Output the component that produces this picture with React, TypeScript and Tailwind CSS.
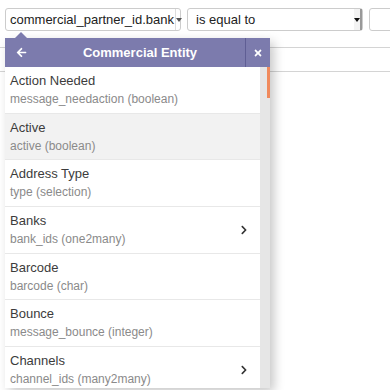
import { FaArrowLeft, FaTimes, FaChevronRight } from 'react-icons/fa';

const fields = [
  { label: 'Action Needed', name: 'message_needaction (boolean)' },
  { label: 'Active', name: 'active (boolean)', hover: true },
  { label: 'Address Type', name: 'type (selection)' },
  { label: 'Banks', name: 'bank_ids (one2many)', relation: true },
  { label: 'Barcode', name: 'barcode (char)' },
  { label: 'Bounce', name: 'message_bounce (integer)' },
  { label: 'Channels', name: 'channel_ids (many2many)', relation: true },
];

export default function App() {
  return (
    <div className="relative w-[390px] h-[390px] overflow-hidden bg-white font-['Liberation_Sans',Arial,sans-serif] text-[#333]">
      {/* Domain row */}
      <div className="flex items-center gap-[6px] pl-[5px] pt-[8px]">
        <div className="flex h-[23px] w-[176px] shrink-0 items-center rounded-[3px] border border-[#ccc] bg-white">
          <span className="flex-1 whitespace-nowrap pl-[4px] text-[13px] leading-[16px] text-[#222]">commercial_partner_id.bank</span>
          <span className="mr-[1px] h-[15px] w-px bg-black" />
          <span className="flex h-full w-[8px] items-center justify-center border-l border-[#ddd]">
            <span className="h-0 w-0 border-x-[3px] border-t-[4px] border-x-transparent border-t-[#555]" />
          </span>
        </div>
        <div className="flex h-[23px] w-[176px] shrink-0 items-center rounded-[3px] border border-[#ccc] bg-white">
          <span className="flex-1 pl-[8px] text-[13px] leading-[16px] text-[#222]">is equal to</span>
          <span className="flex h-full w-[8px] items-center justify-center border-r-[2px] border-[#999] bg-[#f3f3f3]">
            <span className="h-0 w-0 border-x-[3px] border-t-[4px] border-x-transparent border-t-[#111]" />
          </span>
        </div>
        <div className="h-[23px] w-[60px] shrink-0 rounded-[3px] border border-[#ccc] bg-white" />
      </div>

      {/* Row behind the popover */}
      <div className="mt-[16px] h-[25px] border-y border-[#d4d4d4]" />

      {/* Field selector popover */}
      <div className="absolute left-[5px] top-[38px] w-[265px] shadow-[4px_4px_10px_rgba(0,0,0,0.22)]">
        <div className="absolute left-[10px] top-[-6px] h-0 w-0 border-x-[6px] border-b-[6px] border-x-transparent border-b-[#7c7bad]" />
        <div className="flex h-[29px] items-center bg-[#7c7bad] text-white">
          <span className="flex w-[30px] items-center justify-center pl-[3px]">
            <FaArrowLeft className="h-[11px] w-[11px]" />
          </span>
          <span className="flex-1 text-center text-[13px] font-bold">Commercial Entity</span>
          <span className="flex h-full w-[25px] items-center justify-center border-l border-[#5f5e94]">
            <FaTimes className="h-[10px] w-[10px]" />
          </span>
        </div>
        <div className="flex h-[321px]">
          <div className="flex-1 overflow-hidden bg-white">
            {fields.map((f) => (
              <div
                key={f.label}
                className={`flex h-[46.7px] items-center border-b border-[#e8e8e8] pl-[5px] pr-[11px] ${f.hover ? 'bg-[#f2f2f2]' : ''}`}
              >
                <div className="flex-1">
                  <div className="text-[13px] leading-[18px] text-[#3c3c3c]">{f.label}</div>
                  <div className="mt-[1px] text-[12px] leading-[17px] text-[#8a8a8a]">{f.name}</div>
                </div>
                {f.relation && <FaChevronRight className="h-[10px] w-[10px] text-[#333]" />}
              </div>
            ))}
          </div>
          <div className="w-[10px] bg-[#e6e6e6]">
            <div className="ml-auto h-[31px] w-[3px] bg-[#f08a5d]" />
          </div>
        </div>
      </div>
    </div>
  );
}
